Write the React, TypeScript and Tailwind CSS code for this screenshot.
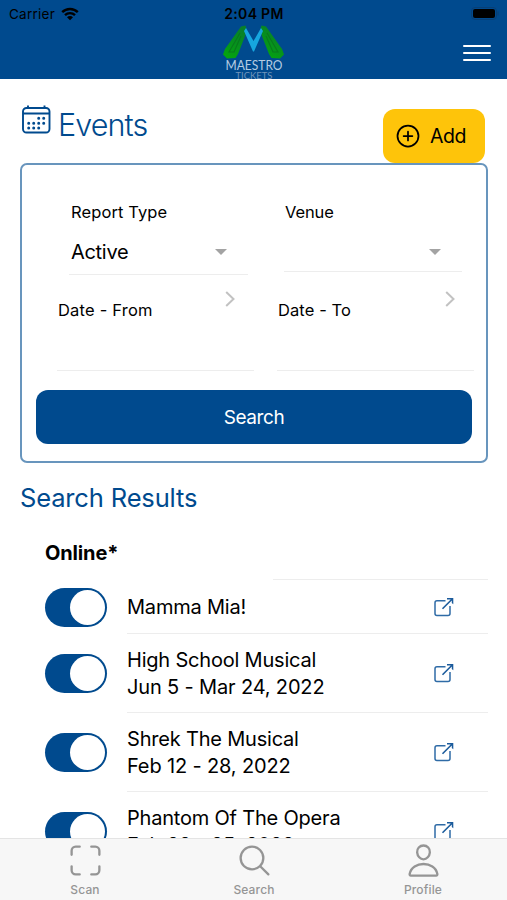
import { useState } from "react";
import {
  IoAddCircleOutline,
  IoPersonOutline,
  IoScanOutline,
  IoSearchOutline,
} from "react-icons/io5";

const initialEvents = [
  { name: "Mamma Mia!", dates: "", online: true },
  { name: "High School Musical", dates: "Jun 5 - Mar 24, 2022", online: true },
  { name: "Shrek The Musical", dates: "Feb 12 - 28, 2022", online: true },
  { name: "Phantom Of The Opera", dates: "Feb 22 - 25, 2022", online: true },
];

const tabs = [
  { label: "Scan", icon: IoScanOutline },
  { label: "Search", icon: IoSearchOutline },
  { label: "Profile", icon: IoPersonOutline },
];

const Logo = () => (
  <svg
    width="66"
    height="55"
    viewBox="0 0 66 55"
    className="block overflow-visible"
  >
    <defs>
      <linearGradient id="leaf" x1="0" y1="1" x2="0.5" y2="0">
        <stop offset="0" stopColor="#04a80c" />
        <stop offset="1" stopColor="#08802a" />
      </linearGradient>
    </defs>
    <path
      d="M21 2.5 25.5 1.5 27 7 18 30 15.5 34 7 34.5 3 30.5 5 25Z"
      fill="url(#leaf)"
    />
    <path
      d="M46 2.5 41.5 1.5 40 7 49 30 51.5 34 60 34.5 64 30.5 62 25Z"
      fill="url(#leaf)"
    />
    <path
      d="M20 9 9 28H14L21 12M47 9 58 28H53L46 12"
      fill="none"
      stroke="#087a1c"
      strokeWidth="1.1"
    />
    <path d="M26 4 33.5 17 41 4 43 7 34 27.5H33L24 7Z" fill="#16a6df" />
    <text
      x="34"
      y="46"
      textAnchor="middle"
      textLength="57"
      lengthAdjust="spacingAndGlyphs"
      fontSize="13.5"
      fill="#b5cce2"
      fontFamily="Lato, sans-serif"
    >
      MAESTRO
    </text>
    <text
      x="34"
      y="54.8"
      textAnchor="middle"
      textLength="37"
      lengthAdjust="spacingAndGlyphs"
      fontSize="8.5"
      fill="#7195bb"
      fontFamily="Lato, sans-serif"
    >
      TICKETS
    </text>
  </svg>
);

const CalendarIcon = () => (
  <svg width="30" height="30" viewBox="0 0 30 30" fill="none">
    <rect
      x="1"
      y="3"
      width="26.5"
      height="24.5"
      rx="3.5"
      stroke="currentColor"
      strokeWidth="1.9"
    />
    <path
      d="M1 8.5H27.5M6 0.5V3M22.5 0.5V3"
      stroke="currentColor"
      strokeWidth="1.9"
    />
    <path
      d="M16.7 13.3h.01M21.7 13.3h.01M6.7 18.2h.01M11.7 18.2h.01M16.7 18.2h.01M21.7 18.2h.01M6.7 23.1h.01M11.7 23.1h.01M16.7 23.1h.01"
      stroke="currentColor"
      strokeWidth="3"
      strokeLinecap="round"
    />
  </svg>
);

const OpenIcon = () => (
  <svg width="20" height="20" viewBox="0 0 20 20" fill="none">
    <path
      d="M11.5 3.8H3A2 2 0 0 0 1 5.8V16.5a2 2 0 0 0 2 2H14a2 2 0 0 0 2-2V9"
      stroke="#2f6ba6"
      strokeWidth="1.5"
    />
    <path d="M8.5 11.8 18 2.2" stroke="#1b5b9c" strokeWidth="1.6" />
    <path d="M13 1H19.3V7.2L17.8 6V3.8L16.4 2.4H13z" fill="#1b5b9c" />
  </svg>
);

const Caret = () => (
  <svg width="12" height="6" viewBox="0 0 12 6">
    <path d="M0 0h12L6 6z" fill="#a3a3a3" />
  </svg>
);

const Chevron = () => (
  <svg width="10" height="16" viewBox="0 0 10 16" fill="none">
    <path d="M1.2 1 8.5 8 1.2 15" stroke="#c2c2c2" strokeWidth="2" />
  </svg>
);

const App = () => {
  const [events, setEvents] = useState(initialEvents);

  const toggleOnline = (index: number) => {
    setEvents((prev) =>
      prev.map((item, i) =>
        i === index ? { ...item, online: !item.online } : item,
      ),
    );
  };

  return (
    <div className="flex h-[900px] w-[507px] flex-col overflow-hidden bg-white font-['Inter',_sans-serif] text-black">
      {/* Header */}
      <header className="h-[79px] shrink-0 bg-[#004a8e]">
        <div className="grid h-[24px] grid-cols-3 items-center pt-[4px] pr-[8px] pl-[9px]">
          <div className="flex items-center gap-[6px]">
            <span className="text-[13.5px] leading-5 tracking-[0.25px]">
              Carrier
            </span>
            <svg width="18" height="14" viewBox="0 0 18 14" fill="none">
              <path
                d="M1.2 5.2a11 11 0 0 1 15.6 0M4 8.2a7.1 7.1 0 0 1 10 0"
                stroke="#000"
                strokeWidth="2.4"
              />
              <path d="m9 13.3-3-3a4.2 4.2 0 0 1 6 0z" fill="#000" />
            </svg>
          </div>
          <span className="text-center text-[14px] leading-5 font-semibold tracking-[0.3px] whitespace-nowrap">
            2:04 PM
          </span>
          <div className="flex justify-end">
            <svg width="28" height="14" viewBox="0 0 28 14">
              <rect
                x="0.5"
                y="0.5"
                width="25"
                height="12"
                rx="3.5"
                fill="none"
                stroke="#083f75"
              />
              <rect x="2" y="2" width="22" height="9" rx="2" />
              <path d="M27 4.5v4" stroke="#083f75" />
            </svg>
          </div>
        </div>
        <div className="grid h-[55px] grid-cols-3 items-center px-[16px]">
          <span />
          <div className="flex h-[55px] justify-center">
            <Logo />
          </div>
          <button
            type="button"
            aria-label="Menu"
            className="mt-[3px] flex w-[28px] flex-col gap-[4.7px] justify-self-end"
          >
            <span className="h-[2.5px] rounded-full bg-white" />
            <span className="h-[2.5px] rounded-full bg-white" />
            <span className="h-[2.5px] rounded-full bg-white" />
          </button>
        </div>
      </header>

      <main className="min-h-0 flex-1 overflow-hidden pr-[19px] pl-[20px]">
        {/* Title */}
        <div className="flex h-[84px] items-end justify-between pr-[3px]">
          <div className="flex h-[60px] pt-[2px] pl-[2px] text-[#004a8e]">
            <CalendarIcon />
            <h1 className="ml-[6px] text-[30.5px] leading-[39px] font-light tracking-[-0.9px]">
              Events
            </h1>
          </div>
          <button
            type="button"
            className="flex h-[54px] w-[102px] items-center gap-[8px] rounded-[12px] bg-[#fec40a] pl-[11px]"
          >
            <IoAddCircleOutline size={28} />
            <span className="pt-[2px] text-[19.5px] tracking-[-0.4px]">
              Add
            </span>
          </button>
        </div>

        {/* Filters */}
        <section className="flex h-[300px] flex-col rounded-[7px] border-2 border-[#6895bd] px-[14px]">
          <div className="mt-[34px] flex gap-[36px] pl-[33px]">
            <div className="h-[76px] w-[179px] border-b border-[#ededed] pl-[2px]">
              <div className="text-[16.5px] leading-[26px] tracking-[0.1px]">
                Report Type
              </div>
              <div className="mt-[14px] flex items-center justify-between pr-[21px] text-[20px] leading-[26px] tracking-[-0.3px]">
                Active
                <Caret />
              </div>
            </div>
            <div className="h-[73px] w-[178px] border-b border-[#ededed] pl-px">
              <div className="text-[16.5px] leading-[26px] tracking-[-0.1px]">
                Venue
              </div>
              <div className="mt-[14px] flex h-[26px] items-center justify-end pr-[21px]">
                <Caret />
              </div>
            </div>
          </div>
          <div className="mt-[12px] flex gap-[23px] pl-[21px]">
            <div className="flex h-[84px] w-[197px] shrink-0 justify-between border-b border-[#ededed] pr-[19px] pl-px">
              <span className="pt-[10px] text-[16.5px] leading-[26px] tracking-[0.2px]">
                Date - From
              </span>
              <span className="pt-[4px]">
                <Chevron />
              </span>
            </div>
            <div className="flex h-[84px] w-[197px] shrink-0 justify-between border-b border-[#ededed] pr-[19px] pl-px">
              <span className="pt-[10px] text-[16.5px] leading-[26px] tracking-[0.1px]">
                Date - To
              </span>
              <span className="pt-[4px]">
                <Chevron />
              </span>
            </div>
          </div>
          <button
            type="button"
            className="mt-[19px] h-[54px] rounded-[12px] bg-[#004a8e] pt-[2px] text-[19px] tracking-[-0.4px] text-white"
          >
            Search
          </button>
        </section>

        {/* Results */}
        <h2 className="mt-[17px] text-[25.5px] leading-[35px] tracking-[-0.15px] text-[#004a8e]">
          Search Results
        </h2>
        <div className="flex h-[64px] items-center pt-[12px] pl-[25px] text-[20px] font-bold tracking-[-0.15px]">
          Online*
        </div>
        <div className="ml-[253px] h-px bg-[#ededed]" />
        {events.map((item, index) => (
          <div key={item.name} className="flex items-center pl-[25px]">
            <button
              type="button"
              role="switch"
              aria-checked={item.online}
              aria-label={item.name}
              onClick={() => toggleOnline(index)}
              className={`flex h-[39px] w-[62px] shrink-0 items-center rounded-full px-[2px] ${
                item.online ? "justify-end bg-[#004a8e]" : "bg-[#e0e0e0]"
              }`}
            >
              <span className="size-[35px] rounded-full bg-white" />
            </button>
            <div
              className={`ml-[20px] flex flex-1 items-center justify-between border-b border-[#ededed] pr-[34px] ${
                item.dates ? "h-[79px]" : "h-[54px]"
              }`}
            >
              <div className="pt-px text-[20px] leading-[27px] tracking-[-0.2px] whitespace-nowrap">
                <p>{item.name}</p>
                {item.dates && (
                  <p className="tracking-[-0.15px]">{item.dates}</p>
                )}
              </div>
              <OpenIcon />
            </div>
          </div>
        ))}
      </main>

      {/* Tab bar */}
      <nav className="grid h-[62px] shrink-0 grid-cols-3 border-t border-[#e4e4e4] bg-[#f7f7f7] text-[#959595]">
        {tabs.map(({ label, icon: Icon }) => (
          <button
            key={label}
            type="button"
            className="flex flex-col items-center pt-[3px] pl-px"
          >
            <Icon size={37} />
            <span className="mt-[2px] text-[12px] leading-[18px] font-medium tracking-[0.15px]">
              {label}
            </span>
          </button>
        ))}
      </nav>
    </div>
  );
};

export default App;
